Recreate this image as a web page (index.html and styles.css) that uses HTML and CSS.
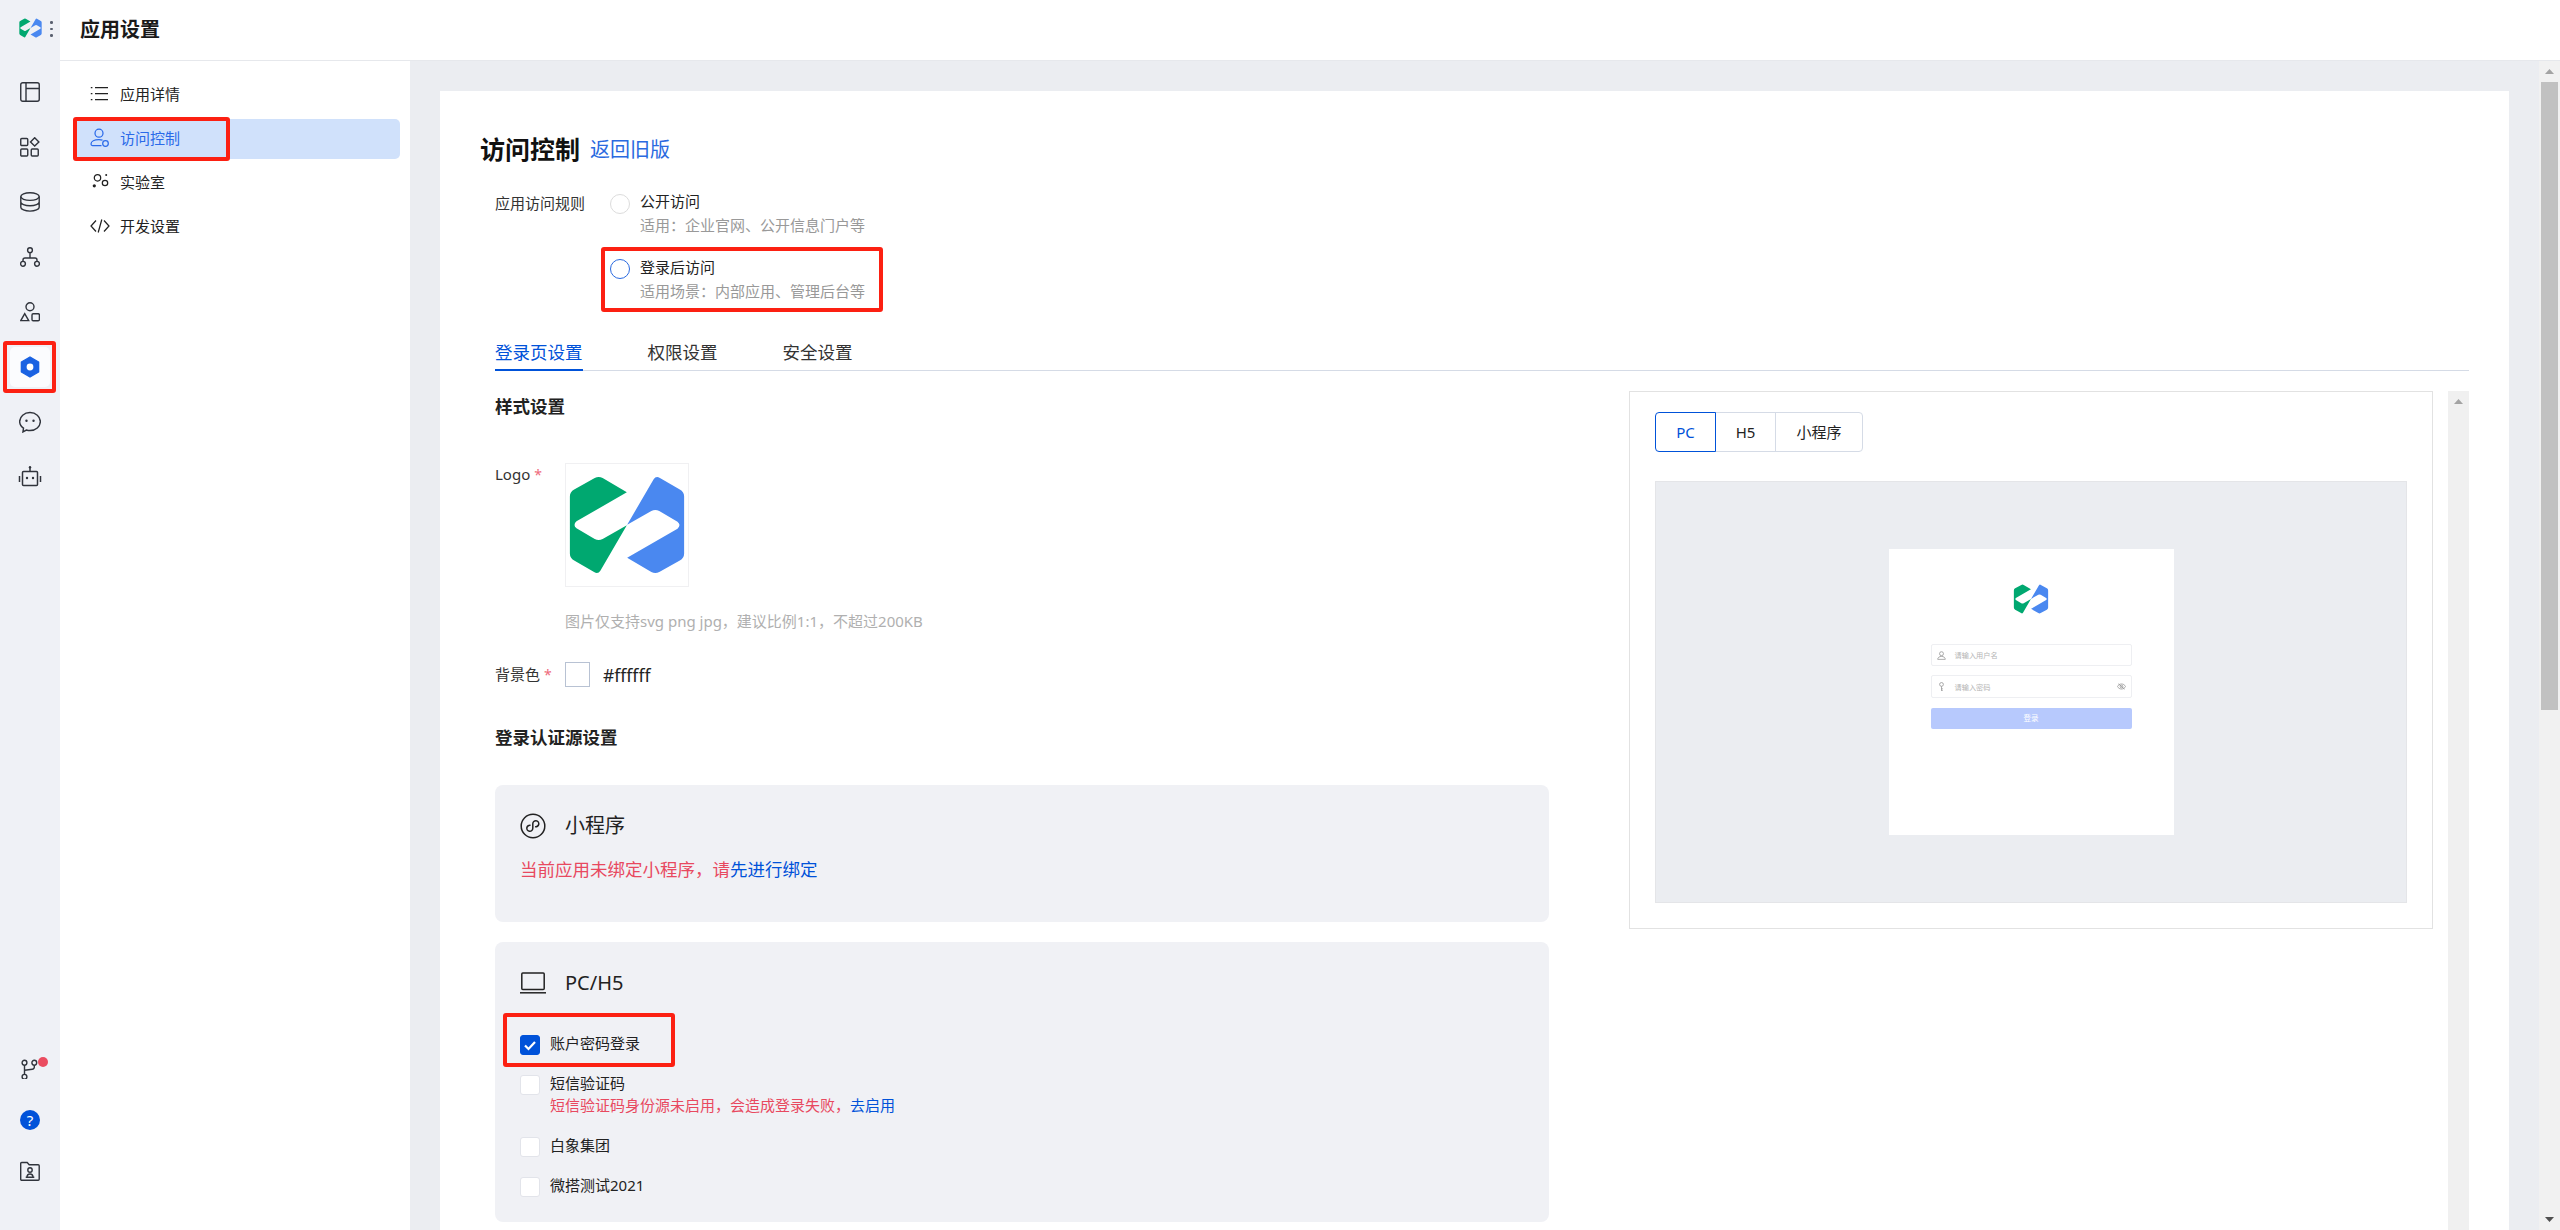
FILE: index.html
```html
<!DOCTYPE html>
<html lang="zh-CN">
<head>
<meta charset="utf-8">
<title>应用设置</title>
<link rel="stylesheet" href="styles.css">
</head>
<body>
<svg class="defs" aria-hidden="true">
  <symbol id="logo" viewBox="265 135 355 302">
    <path fill="#00a870" d="M345 144Q357 138 369 144L442 187L290 275Q278 286 290 296L345 328Q357 335 369 328L442 287L362 424Q355 435 343 428L283 393Q270 386 270 372L270 200Q270 186 283 179Z"/>
    <path fill="#4a88f0" transform="rotate(180 442.5 286)" d="M345 144Q357 138 369 144L442 187L290 275Q278 286 290 296L345 328Q357 335 369 328L442 287L362 424Q355 435 343 428L283 393Q270 386 270 372L270 200Q270 186 283 179Z"/>
  </symbol>
</svg>

<aside class="rail">
  <div class="rail-brand">
    <svg class="rail-logo"><use href="#logo"/></svg>
    <span class="rail-dots"><i></i><i></i><i></i></span>
  </div>
  <nav class="rail-list">
    <a class="rail-item"><svg class="ico" viewBox="0 0 20 20"><rect x=".75" y=".75" width="18.5" height="18.5" rx="2"/><path d="M6 1v18M6 6.5h13"/></svg></a>
    <a class="rail-item"><svg class="ico" viewBox="0 0 20 20"><rect x=".75" y="1.5" width="7" height="7" rx="1"/><rect x=".75" y="12" width="7" height="7" rx="1"/><rect x="11.25" y="12" width="7" height="7" rx="1"/><path d="M14.7.7l4.2 4.2-4.2 4.2-4.2-4.2z"/></svg></a>
    <a class="rail-item"><svg class="ico" viewBox="0 0 20 20"><ellipse cx="10" cy="4.6" rx="9.2" ry="3.8"/><path d="M.8 4.6v10.6c0 2.2 4.1 3.9 9.2 3.9s9.2-1.7 9.2-3.9V4.6M.8 9.9c0 2.2 4.1 3.9 9.2 3.9s9.2-1.7 9.2-3.9"/></svg></a>
    <a class="rail-item"><svg class="ico" viewBox="0 0 20 20"><circle cx="10" cy="3.2" r="2.4"/><circle cx="3" cy="16.8" r="2.4"/><circle cx="17" cy="16.8" r="2.4"/><path d="M10 5.6V11M3 14.4V13a2 2 0 0 1 2-2h10a2 2 0 0 1 2 2v1.4"/></svg></a>
    <a class="rail-item"><svg class="ico" viewBox="0 0 20 20"><circle cx="10" cy="4.8" r="4"/><path d="M4.7 11.6l4 7H.8z"/><rect x="12" y="11.8" width="7.4" height="6.9" rx="1.2"/></svg></a>
    <a class="rail-item is-active">
      <svg class="ico ico-hex" viewBox="0 0 20 22"><path d="M10 1l8.6 5v10L10 21l-8.6-5V6z"/><circle cx="10" cy="11" r="3.4"/></svg>
      <span class="mark mark-rail"></span>
    </a>
    <a class="rail-item"><svg class="ico ico-bubble" viewBox="0 0 20 20"><path d="M3.600 19l.5-3.400C1.900 14.100.6 12 .6 9.600.6 5.100 4.800 1.400 10 1.400s9.400 3.700 9.400 8.200-4.200 8.200-9.400 8.200c-1.200 0-2.300-.2-3.300-.5z"/><circle class="dot" cx="6.800" cy="8.800" r="1.100"/><circle class="dot" cx="13.200" cy="8.800" r="1.100"/></svg></a>
    <a class="rail-item"><svg class="ico ico-bot" viewBox="0 0 24 24"><rect x="4.500" y="6.500" width="15" height="14" rx="1"/><path d="M12 2.500v4M1.500 11v6M22.500 11v6"/><circle class="dot" cx="12" cy="2.200" r="1.200"/><circle class="dot" cx="9" cy="13" r="1.200"/><circle class="dot" cx="15" cy="13" r="1.200"/></svg></a>
  </nav>
  <nav class="rail-list rail-bottom">
    <a class="rail-item rail-item-sm">
      <svg class="ico" viewBox="0 0 20 20"><circle cx="4.500" cy="3.700" r="2.400"/><circle cx="14.300" cy="3.700" r="2.400"/><circle cx="4.500" cy="17.800" r="2.400"/><path d="M4.500 6v9.500M14.300 6v2a2 2 0 0 1-2 2.200L4.500 11.200"/></svg>
      <span class="badge"></span>
    </a>
    <a class="rail-item rail-item-sm"><span class="help">?</span></a>
    <a class="rail-item rail-item-sm"><svg class="ico" viewBox="0 0 20 20"><path d="M.7 2.500a1 1 0 0 1 1-1h5.500l2 2.300h9a1 1 0 0 1 1 1v13.500a1 1 0 0 1-1 1H1.700a1 1 0 0 1-1-1z"/><circle cx="10" cy="9" r="2.200"/><path d="M5.700 16.300h8.600M7 16.300c0-2 1.200-3.300 3-3.300s3 1.300 3 3.300"/></svg></a>
  </nav>
</aside>

<div class="app">
  <header class="topbar">应用设置</header>
  <div class="workspace">
    <nav class="sidenav">
      <a class="nav-item">
        <svg class="nav-ico" viewBox="0 0 20 20"><path d="M5 3.500h13M5 9.500h13M5 15.500h13M.8 3.500h1.600M.8 9.500h1.600M.8 15.500h1.600"/></svg>
        <span class="nav-text">应用详情</span>
      </a>
      <a class="nav-item is-active">
        <svg class="nav-ico" viewBox="0 0 20 20"><circle cx="9" cy="5.200" r="4"/><path d="M2.500 17.500c-1 0-1.500-.6-1.500-1.500 0-2.600 3.500-4.400 8-4.400 1.300 0 2.500.2 3.500.5M2.500 17.500h9"/><circle cx="15.500" cy="15.500" r="2.800"/></svg>
        <span class="nav-text">访问控制</span>
        <span class="mark mark-nav"></span>
      </a>
      <a class="nav-item">
        <svg class="nav-ico" viewBox="0 0 20 20"><circle cx="7.500" cy="5.800" r="3.200"/><circle cx="15" cy="11" r="2.700"/><circle class="dot" cx="4.300" cy="13.800" r="1.600"/><circle class="dot" cx="16.200" cy="3" r="1"/></svg>
        <span class="nav-text">实验室</span>
      </a>
      <a class="nav-item">
        <svg class="nav-ico" viewBox="0 0 20 20"><path d="M6 4.500L1 10l5 5.500M14 4.500L19 10l-5 5.500M11.800 3.500L8.200 16.500"/></svg>
        <span class="nav-text">开发设置</span>
      </a>
    </nav>

    <main class="main">
      <section class="card">
        <div class="card-head">
          <h1 class="card-title">访问控制</h1>
          <a class="back-link">返回旧版</a>
        </div>

        <div class="rules">
          <div class="rules-label">应用访问规则</div>
          <div class="rules-options">
            <div class="option">
              <span class="radio"></span>
              <div>
                <div class="option-title">公开访问</div>
                <div class="option-sub">适用：企业官网、公开信息门户等</div>
              </div>
            </div>
            <div class="option">
              <span class="radio is-on"></span>
              <div>
                <div class="option-title">登录后访问</div>
                <div class="option-sub">适用场景：内部应用、管理后台等</div>
              </div>
              <span class="mark mark-option"></span>
            </div>
          </div>
        </div>

        <div class="tabs">
          <a class="tab is-active">登录页设置</a>
          <a class="tab">权限设置</a>
          <a class="tab">安全设置</a>
        </div>

        <div class="cols">
          <div class="form">
            <h2 class="section-title section-first">样式设置</h2>
            <div class="field field-logo">
              <label class="field-label">Logo<em>*</em></label>
              <div class="logo-box"><svg class="logo-main"><use href="#logo"/></svg></div>
            </div>
            <p class="hint">图片仅支持svg png jpg，建议比例1:1，不超过200KB</p>
            <div class="field field-color">
              <label class="field-label">背景色<em>*</em></label>
              <span class="swatch"></span>
              <span class="hex">#ffffff</span>
            </div>
            <h2 class="section-title section-auth">登录认证源设置</h2>

            <div class="panel panel-mini">
              <div class="panel-head">
                <svg class="panel-ico" viewBox="0 0 26 26"><circle cx="13" cy="13" r="11.800"/><path d="M10.600 12.400a3 3 0 1 0 2.200 2.900V10.700a3 3 0 1 1 2.200 2.900"/></svg>
                <span>小程序</span>
              </div>
              <p class="warn">当前应用未绑定小程序，请<a class="link">先进行绑定</a></p>
            </div>

            <div class="panel panel-web">
              <div class="panel-head">
                <svg class="panel-ico" viewBox="0 0 26 26"><rect x="1.800" y="3" width="22.400" height="16.400" rx="1"/><path d="M0 22.800h26"/></svg>
                <span>PC/H5</span>
              </div>
              <div class="checks">
                <div class="check">
                  <span class="box is-on"><svg viewBox="0 0 18 18"><path d="M4 9.500l3.500 3.500 6.500-7"/></svg></span>
                  <span class="check-text">账户密码登录</span>
                  <span class="mark mark-check"></span>
                </div>
                <div class="check check-tall">
                  <span class="box"></span>
                  <div class="check-text">
                    <div>短信验证码</div>
                    <div class="check-warn">短信验证码身份源未启用，会造成登录失败，<a class="link">去启用</a></div>
                  </div>
                </div>
                <div class="check">
                  <span class="box"></span>
                  <span class="check-text">白象集团</span>
                </div>
                <div class="check">
                  <span class="box"></span>
                  <span class="check-text">微搭测试2021</span>
                </div>
              </div>
            </div>
          </div>

          <div class="pane">
            <div class="seg">
              <a class="seg-btn seg-pc is-active">PC</a>
              <a class="seg-btn seg-h5">H5</a>
              <a class="seg-btn seg-mp">小程序</a>
            </div>
            <div class="stage">
              <div class="login">
                <svg class="login-logo"><use href="#logo"/></svg>
                <div class="login-input">
                  <svg class="mini-ico" viewBox="0 0 10 10"><circle cx="5" cy="3" r="2.200"/><path d="M.8 9.300c0-2 1.800-3.300 4.200-3.300s4.200 1.300 4.200 3.300z"/></svg>
                  <span>请输入用户名</span>
                </div>
                <div class="login-input">
                  <svg class="mini-ico" viewBox="0 0 10 10"><circle cx="5" cy="2.700" r="2.100"/><path d="M5 4.800v5M5 7.500h1.500M5 9.300h1.500"/></svg>
                  <span>请输入密码</span>
                  <svg class="mini-ico mini-eye" viewBox="0 0 10 8"><path d="M.5 4C1.500 2.200 3 1.200 5 1.200S8.500 2.200 9.500 4C8.500 5.800 7 6.800 5 6.800S1.500 5.800.5 4z"/><circle cx="5" cy="4" r="1.500"/><path d="M1.500 1l7 6"/></svg>
                </div>
                <div class="login-btn">登录</div>
              </div>
            </div>
          </div>

          <div class="vbar vbar-inner"><span class="arrow arrow-up"></span></div>
        </div>
      </section>
    </main>

    <div class="vbar vbar-page">
      <span class="arrow arrow-up"></span>
      <span class="thumb"></span>
      <span class="arrow arrow-down"></span>
    </div>
  </div>
</div>
</body>
</html>
```

FILE: styles.css
```css
* { box-sizing: border-box; }
html, body { height: 100%; }
body {
  margin: 0;
  display: flex;
  height: 100vh;
  overflow: hidden;
  background: #fff;
  color: #1f1f1f;
  font-family: "Noto Sans", "Noto Sans CJK SC", sans-serif;
  font-size: 15px;
  line-height: 24px;
}
h1, h2, p { margin: 0; }
a { color: inherit; text-decoration: none; }
em { font-style: normal; }
.defs { position: absolute; width: 0; height: 0; }

/* annotation frames drawn over the screenshot */
.mark {
  position: absolute;
  border: 4px solid #fc2012;
  border-radius: 3px;
  pointer-events: none;
}
.mark-rail { left: -7px; top: -6px; width: 53px; height: 52px; }
.mark-nav { left: 0; top: -2px; width: 157px; height: 44px; }
.mark-option { left: -9px; top: -8px; width: 282px; height: 65px; }
.mark-check { left: -17px; top: -22px; width: 172px; height: 54px; }

/* left rail */
.rail {
  flex: 0 0 60px;
  display: flex;
  flex-direction: column;
  background: #eff1f6;
  padding-bottom: 39px;
}
.rail-brand {
  height: 72px;
  padding: 18px 0 0 19px;
  display: flex;
  align-items: flex-start;
  gap: 8px;
}
.rail-logo { width: 23px; height: 20px; }
.rail-dots { display: flex; flex-direction: column; gap: 4px; padding-top: 3px; }
.rail-dots i { width: 2.500px; height: 2.500px; border-radius: 50%; background: #5a6170; }
.rail-list { display: flex; flex-direction: column; gap: 15px; padding: 0 10px; }
.rail-bottom { margin-top: auto; gap: 11px; }
.rail-item {
  position: relative;
  height: 40px;
  display: flex;
  align-items: center;
  justify-content: center;
  border-radius: 5px;
}
.rail-item.is-active { background: #fbfcfe; }
.ico { width: 20px; height: 20px; fill: none; stroke: #30343c; stroke-width: 1.400; }
.ico .dot { fill: #30343c; stroke: none; }
.ico-bubble { width: 22px; height: 22px; stroke-width: 1.300; }
.ico-bot { width: 24px; height: 24px; stroke-width: 1.500; }
.ico-hex { height: 22px; stroke: #1a62e2; fill: #1a62e2; stroke-linejoin: round; }
.ico-hex circle { fill: #fff; stroke: none; }
.badge {
  position: absolute;
  left: 28px;
  top: 8px;
  width: 10px;
  height: 10px;
  border-radius: 50%;
  background: #ea4c60;
}
.help {
  width: 20px;
  height: 20px;
  border-radius: 50%;
  background: #0052d9;
  color: #fff;
  font-size: 15px;
  line-height: 20px;
  text-align: center;
}

/* app frame */
.app { flex: 1; min-width: 0; display: flex; flex-direction: column; }
.topbar {
  flex: 0 0 61px;
  padding-left: 20px;
  border-bottom: 1px solid #e6e8ec;
  font-size: 20px;
  font-weight: 700;
  line-height: 60px;
  color: #1a1a1a;
}
.workspace { flex: 1; min-height: 0; display: flex; }

/* secondary nav */
.sidenav {
  flex: 0 0 350px;
  padding: 14px 10px 0 13px;
  display: flex;
  flex-direction: column;
  gap: 4px;
}
.nav-item {
  position: relative;
  height: 40px;
  padding-left: 17px;
  display: flex;
  align-items: center;
  gap: 10px;
  border-radius: 5px;
  color: #222;
}
.nav-item.is-active { background: #d0e1fb; color: #2a6ae9; }
.nav-text { margin-top: -2px; }
.nav-ico { width: 20px; height: 20px; margin-top: -2px; fill: none; stroke: currentColor; stroke-width: 1.250; }
.nav-ico .dot { fill: currentColor; stroke: none; }

/* main */
.main {
  flex: 1;
  min-width: 0;
  display: flex;
  padding: 30px 30px 0;
  background: #ebedf1;
  overflow: hidden;
}
.card {
  flex: 1;
  min-width: 0;
  display: flex;
  flex-direction: column;
  padding: 41px 40px 0;
  background: #fff;
}
.card-head { flex: 0 0 34px; height: 34px; display: flex; align-items: center; gap: 10px; line-height: 34px; }
.card-title { font-size: 25px; font-weight: 700; color: #111; }
.back-link { font-size: 20px; margin-top: 1px; color: #2a6ae0; }

.rules { display: flex; margin: 23px 0 0 15px; }
.rules-label { flex: 0 0 115px; margin-top: 2px; color: #333; }
.rules-options { display: flex; flex-direction: column; gap: 18px; }
.option { position: relative; display: flex; gap: 10px; }
.radio {
  flex: none;
  width: 20px;
  height: 20px;
  margin-top: 5px;
  border: 1px solid #dcdcdc;
  border-radius: 50%;
}
.radio.is-on { border-color: #2a6ae0; margin-top: 4px; }
.option-title { color: #222; }
.option-sub { color: #999; }

.tabs {
  display: flex;
  gap: 65px;
  margin: 37px 0 0 15px;
  border-bottom: 1px solid #d5dbe6;
  font-size: 17.500px;
}
.tab { padding-bottom: 5px; border-bottom: 2px solid transparent; margin-bottom: -1px; color: #333; }
.tab.is-active { color: #0052d9; border-bottom-color: #0052d9; }

.cols { flex: 1; min-height: 0; display: flex; padding-top: 20px; }

/* form */
.form { flex: 0 0 1054px; margin-left: 15px; }
.section-title { font-size: 17.500px; font-weight: 700; color: #222; }
.section-first { margin-top: 3px; }
.section-auth { margin-top: 38px; }
.field { display: flex; }
.field-logo { margin-top: 45px; }
.field-color { margin-top: 29px; align-items: center; }
.field-label { flex: 0 0 70px; color: #333; }
.field-logo .field-label { margin-top: -1px; }
.field-label em { margin-left: 4px; color: #ee6a7a; font-size: 14px; }
.logo-box {
  width: 124px;
  height: 124px;
  display: flex;
  align-items: center;
  justify-content: center;
  border: 1px solid #f0f0f2;
}
.logo-main { width: 118px; height: 100px; }
.hint { margin: 22px 0 0 70px; color: #b0b0b0; }
.swatch { width: 25px; height: 25px; border: 1px solid #b8c2d3; }
.hex { margin-left: 13px; font-size: 17.500px; color: #222; }

.panel { margin-bottom: 20px; width: 1054px; padding: 26px 25px 0; background: #f0f1f5; border-radius: 8px; }
.panel-mini { margin-top: 36px; height: 137px; }
.panel-web { height: 280px; }
.panel-head { display: flex; align-items: center; gap: 19px; font-size: 20px; line-height: 30px; color: #222; }
.panel-ico { width: 26px; height: 26px; fill: none; stroke: #222; stroke-width: 1.500; }
.warn { margin-top: 16px; font-size: 17.500px; color: #e8495f; }
.link { color: #0052d9; }

.checks { margin-top: 37px; font-size: 15px; line-height: 20px; display: flex; flex-direction: column; gap: 20px; }
.check { position: relative; display: flex; gap: 10px; color: #222; }
.check-tall { padding-bottom: 2px; }
.check-text { margin-top: -2px; }
.check-warn { margin-top: 2px; color: #e8495f; }
.box { flex: none; width: 20px; height: 20px; background: #fff; border: 1px solid #e2e4ea; border-radius: 3px; }
.box.is-on { background: #0052d9; border-color: #0052d9; }
.box svg { display: block; width: 18px; height: 18px; fill: none; stroke: #fff; stroke-width: 2.200; }

/* preview */
.pane {
  flex: 0 0 804px;
  align-self: flex-start;
  margin-left: 80px;
  padding: 20px 25px 25px;
  border: 1px solid #e2e2e2;
}
.seg { display: flex; height: 40px; }
.seg-btn {
  display: flex;
  align-items: center;
  justify-content: center;
  border: 1px solid #d5dbe6;
  margin-left: -1px;
  color: #222;
}
.seg-pc { width: 61px; margin-left: 0; border-radius: 4px 0 0 4px; }
.seg-h5 { width: 61px; }
.seg-mp { width: 88px; border-radius: 0 4px 4px 0; }
.seg-btn.is-active { position: relative; border-color: #0052d9; color: #0052d9; }
.stage {
  height: 422px;
  margin-top: 29px;
  display: flex;
  align-items: center;
  justify-content: center;
  background: #ebedf1;
  border: 1px solid #e4e5e8;
}
.login {
  width: 285px;
  height: 286px;
  padding: 35px 42px 0;
  display: flex;
  flex-direction: column;
  background: #fff;
}
.login-logo { width: 36px; height: 30px; align-self: center; margin-bottom: 30px; }
.login-input {
  height: 22px;
  margin-bottom: 9px;
  padding: 0 5px;
  display: flex;
  align-items: center;
  gap: 9px;
  border: 1px solid #eeeff2;
  border-radius: 2px;
  font-size: 7.200px;
  color: #b4b4b4;
}
.login-input + .login-input { height: 23px; margin-bottom: 10px; }
.mini-ico { width: 9px; height: 9px; fill: none; stroke: #8d8d8d; stroke-width: .8; }
.mini-eye { margin-left: auto; }
.login-btn {
  height: 21px;
  background: #b7c9fd;
  border-radius: 2px;
  color: #fff;
  font-size: 7.500px;
  line-height: 21px;
  text-align: center;
}

/* scrollbars */
.vbar { flex: 0 0 21px; display: flex; flex-direction: column; align-items: center; background: #f1f1f1; }
.vbar-inner { margin-left: 15px; background: #f0f0f0; }
.arrow {
  flex: 0 0 21px;
  width: 21px;
  display: flex;
  align-items: center;
  justify-content: center;
}
.arrow::before { content: ""; width: 9px; height: 5px; }
.arrow-up::before { background: #a3a3a3; clip-path: polygon(50% 0, 100% 100%, 0 100%); }
.arrow-down::before { background: #505050; clip-path: polygon(0 0, 100% 0, 50% 100%); }
.thumb { flex: 0 0 628px; width: 17px; background: #c1c1c1; }
.arrow-down { margin-top: auto; }
```
